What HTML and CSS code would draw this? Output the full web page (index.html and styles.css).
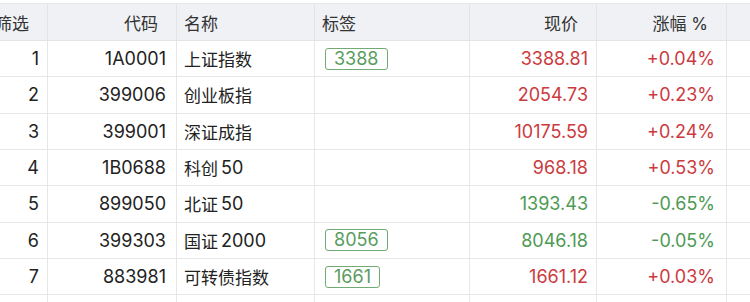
FILE: index.html
```html
<!DOCTYPE html>
<html lang="zh-CN">

<head>
    <meta charset="UTF-8">
    <meta name="viewport" content="width=device-width, initial-scale=1.0">
    <title>指数行情</title>
    <link rel="stylesheet" href="styles.css">
</head>

<body>
    <div class="quote-table">
        <div class="row head">
            <div class="cell num">筛选</div>
            <div class="cell num">代码</div>
            <div class="cell">名称</div>
            <div class="cell">标签</div>
            <div class="cell num">现价</div>
            <div class="cell num">涨幅 %</div>
            <div class="cell"></div>
        </div>
        <div class="row">
            <div class="cell num">1</div>
            <div class="cell num">1A0001</div>
            <div class="cell">上证指数</div>
            <div class="cell"><span class="tag">3388</span></div>
            <div class="cell num up">3388.81</div>
            <div class="cell num up">+0.04%</div>
            <div class="cell"></div>
        </div>
        <div class="row">
            <div class="cell num">2</div>
            <div class="cell num">399006</div>
            <div class="cell">创业板指</div>
            <div class="cell"></div>
            <div class="cell num up">2054.73</div>
            <div class="cell num up">+0.23%</div>
            <div class="cell"></div>
        </div>
        <div class="row">
            <div class="cell num">3</div>
            <div class="cell num">399001</div>
            <div class="cell">深证成指</div>
            <div class="cell"></div>
            <div class="cell num up">10175.59</div>
            <div class="cell num up">+0.24%</div>
            <div class="cell"></div>
        </div>
        <div class="row">
            <div class="cell num">4</div>
            <div class="cell num">1B0688</div>
            <div class="cell">科创<span class="lat">50</span></div>
            <div class="cell"></div>
            <div class="cell num up">968.18</div>
            <div class="cell num up">+0.53%</div>
            <div class="cell"></div>
        </div>
        <div class="row">
            <div class="cell num">5</div>
            <div class="cell num">899050</div>
            <div class="cell">北证<span class="lat">50</span></div>
            <div class="cell"></div>
            <div class="cell num down">1393.43</div>
            <div class="cell num down">-0.65%</div>
            <div class="cell"></div>
        </div>
        <div class="row">
            <div class="cell num">6</div>
            <div class="cell num">399303</div>
            <div class="cell">国证<span class="lat">2000</span></div>
            <div class="cell"><span class="tag">8056</span></div>
            <div class="cell num down">8046.18</div>
            <div class="cell num down">-0.05%</div>
            <div class="cell"></div>
        </div>
        <div class="row">
            <div class="cell num">7</div>
            <div class="cell num">883981</div>
            <div class="cell">可转债指数</div>
            <div class="cell"><span class="tag">1661</span></div>
            <div class="cell num up">1661.12</div>
            <div class="cell num up">+0.03%</div>
            <div class="cell"></div>
        </div>
        <div class="row">
            <div class="cell num">8</div>
            <div class="cell num">000300</div>
            <div class="cell">沪深<span class="lat">300</span></div>
            <div class="cell"><span class="tag">3936</span></div>
            <div class="cell num up">3936.08</div>
            <div class="cell num up">+0.12%</div>
            <div class="cell"></div>
        </div>
    </div>
</body>

</html>
```

FILE: styles.css
```css
* {
    margin: 0;
    padding: 0;
    box-sizing: border-box;
}

body {
    font-family: 'Inter', 'Noto Sans CJK SC', sans-serif;
    background-color: #ffffff;
    color: #222;
    overflow: hidden;
}

/* 表格向左滚动了一点，首列被截掉 */
.quote-table {
    margin-top: 3px;
    margin-left: -12px;
    width: 799px;
    border-top: 1px solid #e6e7ea;
}

.row {
    display: grid;
    grid-template-columns: 60px 129px 138px 155px 127px 130px 60px;
    height: 36.33px;
    border-bottom: 1px solid #e7e7e7;
}

.row.head {
    height: 37px;
    background-color: #eff1f5;
    border-bottom-color: #e2e4e8;
}

.cell {
    display: flex;
    align-items: center;
    padding: 0 7px;
    border-right: 1px solid #e7e7e7;
    font-size: 17px;
    white-space: nowrap;
}

.row .cell:nth-child(1) {
    padding-right: 8px;
}

.row .cell:nth-child(2) {
    padding-right: 10px;
}

.row .cell:nth-child(5) {
    padding-right: 8px;
}

.row .cell:nth-child(6) {
    padding-right: 11px;
}

.head .cell {
    font-size: 17px;
    color: #333;
    border-right-color: #e2e4e8;
}

.head .cell.num {
    padding-right: 18px;
}

.num {
    justify-content: flex-end;
    font-size: 18px;
}

.lat {
    margin-left: 3px;
    font-size: 18px;
}

.up {
    color: #cc3a40;
}

.down {
    color: #4d9a53;
}

.tag {
    display: inline-block;
    margin-left: 3px;
    padding: 0 8px;
    height: 22px;
    line-height: 20px;
    border: 1px solid #72aa74;
    border-radius: 3px;
    color: #5a9c5e;
    font-size: 18px;
}
```
